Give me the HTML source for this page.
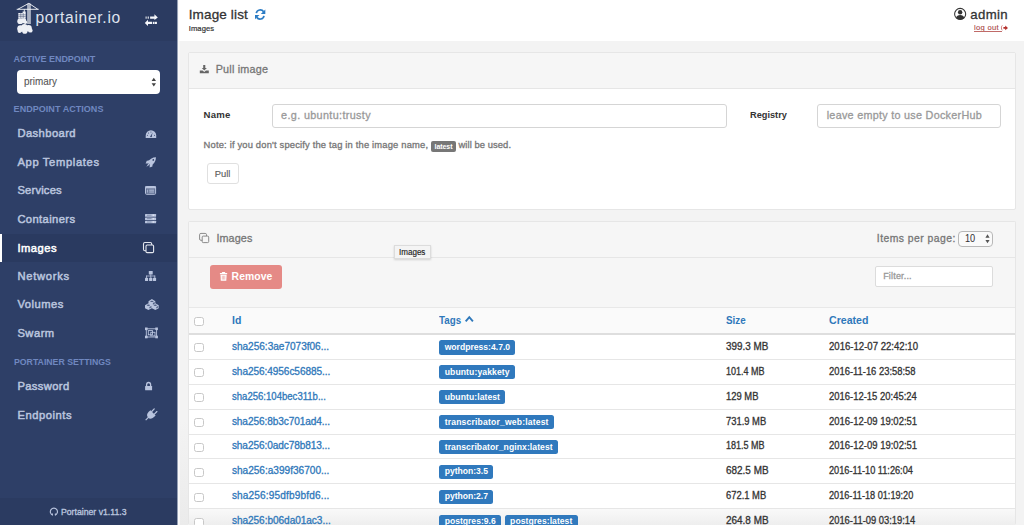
<!DOCTYPE html>
<html><head><meta charset="utf-8"><title>Portainer - Images</title>
<style>
html,body{margin:0;padding:0;width:1024px;height:525px;overflow:hidden;background:#f3f3f3;}
body{position:relative;font-family:"Liberation Sans", sans-serif;}
.t{position:absolute;white-space:nowrap;}
.r{position:absolute;}
.lbl{position:absolute;height:14.5px;line-height:14.5px;padding:0 4.5px;background:#2f78ba;color:#fff;font-weight:bold;font-size:9.4px;letter-spacing:0.1px;border-radius:2px;white-space:nowrap;}
</style></head><body>
<div class="r" style="left:0px;top:0px;width:1024.00px;height:525.00px;background:#f3f3f3;"></div>
<div class="r" style="left:178px;top:0px;width:846.00px;height:41.00px;background:#fff;"></div>
<div class="r" style="left:0px;top:0px;width:177.00px;height:525.00px;background:#2e3f67;"></div>
<div class="r" style="left:0px;top:0px;width:177.00px;height:41.00px;background:#2b3b61;"></div>
<div class="r" style="left:0px;top:498px;width:177.00px;height:27.00px;background:#2b3b61;"></div>
<div class="r" style="left:177px;top:0px;width:1.00px;height:525.00px;background:#95a0b5;"></div>
<div class="r" style="left:178px;top:0px;width:1.00px;height:525.00px;background:#fafafa;"></div>
<div class="r" style="left:179px;top:41px;width:1.00px;height:484.00px;background:#f7f7f7;"></div>
<div class="r" style="left:180px;top:420px;width:8.00px;height:105.00px;background:linear-gradient(#f3f3f3,#ebebeb);"></div>
<div class="t" style="left:35.50px;top:9.41px;font-size:15.6px;line-height:18.72px;color:#dfe3ee;letter-spacing:0.686px;">portainer.io</div>
<div class="t" style="left:13.60px;top:54.01px;font-size:9px;line-height:10.8px;color:#7088c0;font-weight:bold;letter-spacing:-0.023px;">ACTIVE ENDPOINT</div>
<div class="r" style="left:17px;top:69.8px;width:143.00px;height:24.20px;background:#fff;border-radius:4px;"></div>
<div class="t" style="left:23.70px;top:75.01px;font-size:10.5px;line-height:12.6px;color:#555;-webkit-text-stroke:0.1px #555;transform:scaleX(0.9424);transform-origin:0 0;">primary</div>
<div class="t" style="left:13.60px;top:103.91px;font-size:9px;line-height:10.8px;color:#7088c0;font-weight:bold;letter-spacing:0.042px;">ENDPOINT ACTIONS</div>
<div class="r" style="left:0px;top:234px;width:177.00px;height:28.00px;background:#2a3a60;"></div>
<div class="r" style="left:0px;top:234px;width:2.00px;height:28.00px;background:#fff;"></div>
<div class="t" style="left:17.40px;top:127.40px;font-size:11.2px;line-height:13.44px;color:#b9c4de;letter-spacing:0.433px;-webkit-text-stroke:0.5px #b9c4de;">Dashboard</div>
<div class="t" style="left:17.40px;top:156.10px;font-size:11.2px;line-height:13.44px;color:#b9c4de;letter-spacing:0.657px;-webkit-text-stroke:0.5px #b9c4de;">App Templates</div>
<div class="t" style="left:17.40px;top:184.40px;font-size:11.2px;line-height:13.44px;color:#b9c4de;letter-spacing:0.199px;-webkit-text-stroke:0.5px #b9c4de;">Services</div>
<div class="t" style="left:17.40px;top:212.90px;font-size:11.2px;line-height:13.44px;color:#b9c4de;letter-spacing:0.399px;-webkit-text-stroke:0.5px #b9c4de;">Containers</div>
<div class="t" style="left:17.40px;top:241.81px;font-size:11.2px;line-height:13.44px;color:#ffffff;letter-spacing:0.483px;-webkit-text-stroke:0.5px #ffffff;">Images</div>
<div class="t" style="left:17.40px;top:270.01px;font-size:11.2px;line-height:13.44px;color:#b9c4de;letter-spacing:0.739px;-webkit-text-stroke:0.5px #b9c4de;">Networks</div>
<div class="t" style="left:17.40px;top:298.31px;font-size:11.2px;line-height:13.44px;color:#b9c4de;letter-spacing:0.513px;-webkit-text-stroke:0.5px #b9c4de;">Volumes</div>
<div class="t" style="left:17.40px;top:326.81px;font-size:11.2px;line-height:13.44px;color:#b9c4de;letter-spacing:0.497px;-webkit-text-stroke:0.5px #b9c4de;">Swarm</div>
<div class="t" style="left:13.60px;top:356.91px;font-size:9px;line-height:10.8px;color:#7088c0;font-weight:bold;transform:scaleX(0.9695);transform-origin:0 0;">PORTAINER SETTINGS</div>
<div class="t" style="left:17.40px;top:380.40px;font-size:11.2px;line-height:13.44px;color:#b9c4de;letter-spacing:0.382px;-webkit-text-stroke:0.5px #b9c4de;">Password</div>
<div class="t" style="left:17.40px;top:409.10px;font-size:11.2px;line-height:13.44px;color:#b9c4de;letter-spacing:0.554px;-webkit-text-stroke:0.5px #b9c4de;">Endpoints</div>
<div class="t" style="left:60.50px;top:506.21px;font-size:9.4px;line-height:11.28px;color:#b9c4de;-webkit-text-stroke:0.35px #b9c4de;transform:scaleX(0.9264);transform-origin:0 0;">Portainer v1.11.3</div>
<div class="t" style="left:188.70px;top:6.61px;font-size:13.5px;line-height:16.2px;color:#333;letter-spacing:0.147px;-webkit-text-stroke:0.3px #333;">Image list</div>
<div class="t" style="left:188.70px;top:23.80px;font-size:7.6px;line-height:9.12px;color:#333;letter-spacing:0.099px;-webkit-text-stroke:0.2px #333;">Images</div>
<div class="t" style="left:970.20px;top:6.76px;font-size:13.2px;line-height:15.84px;color:#333;letter-spacing:0.395px;-webkit-text-stroke:0.3px #333;">admin</div>
<div class="t" style="left:974.00px;top:22.60px;font-size:7.6px;line-height:9.12px;color:#a94442;letter-spacing:0.315px;-webkit-text-stroke:0.1px #a94442;">log out</div>
<div class="r" style="left:974px;top:30.9px;width:27.80px;height:0.80px;background:#c06a68;"></div>
<div class="r" style="left:188px;top:52px;width:828.00px;height:158.00px;background:#fff;border:1px solid #e6e6e6;box-sizing:border-box;border-radius:2px;"></div>
<div class="r" style="left:189px;top:53px;width:826.00px;height:36.00px;background:#f6f6f6;border-bottom:1px solid #e6e6e6;box-sizing:border-box;"></div>
<div class="t" style="left:215.70px;top:63.41px;font-size:10.8px;line-height:12.96px;color:#767676;letter-spacing:0.209px;-webkit-text-stroke:0.3px #767676;">Pull image</div>
<div class="t" style="left:203.60px;top:108.92px;font-size:9.6px;line-height:11.52px;color:#333;font-weight:bold;letter-spacing:0.186px;">Name</div>
<div class="r" style="left:272px;top:103.5px;width:455.00px;height:24.00px;background:#fff;border:1px solid #d5d5d5;box-sizing:border-box;border-radius:3px;"></div>
<div class="t" style="left:281.10px;top:109.21px;font-size:10.8px;line-height:12.96px;color:#999;letter-spacing:0.357px;-webkit-text-stroke:0.3px #999;">e.g. ubuntu:trusty</div>
<div class="t" style="left:749.50px;top:109.01px;font-size:9.6px;line-height:11.52px;color:#333;font-weight:bold;transform:scaleX(0.9612);transform-origin:0 0;">Registry</div>
<div class="r" style="left:817.3px;top:103.5px;width:183.30px;height:24.00px;background:#fff;border:1px solid #d5d5d5;box-sizing:border-box;border-radius:3px;"></div>
<div class="t" style="left:826.70px;top:108.80px;font-size:10.8px;line-height:12.96px;color:#999;letter-spacing:0.276px;-webkit-text-stroke:0.3px #999;">leave empty to use DockerHub</div>
<div class="t" style="left:203.60px;top:139.31px;font-size:9.4px;line-height:11.28px;color:#767676;letter-spacing:0.172px;-webkit-text-stroke:0.3px #767676;">Note: if you don't specify the tag in the image name,</div>
<div class="r" style="left:431.2px;top:141.2px;width:24.60px;height:10.40px;background:#777;border-radius:2px;"></div>
<div class="t" style="left:434.50px;top:142.71px;font-size:7px;line-height:8.4px;color:#fff;font-weight:bold;letter-spacing:-0.059px;">latest</div>
<div class="t" style="left:458.50px;top:139.31px;font-size:9.4px;line-height:11.28px;color:#767676;letter-spacing:0.076px;-webkit-text-stroke:0.3px #767676;">will be used.</div>
<div class="r" style="left:207px;top:163px;width:32.00px;height:21.00px;background:#fff;border:1px solid #e0e0e0;box-sizing:border-box;border-radius:3px;"></div>
<div class="t" style="left:214.70px;top:167.90px;font-size:9.4px;line-height:11.28px;color:#5a5a5a;letter-spacing:-0.014px;-webkit-text-stroke:0.12px #5a5a5a;">Pull</div>
<div class="r" style="left:188px;top:221px;width:828.00px;height:304.00px;background:#fff;border:1px solid #e6e6e6;border-bottom:none;box-sizing:border-box;border-radius:2px;"></div>
<div class="r" style="left:189px;top:222px;width:826.00px;height:85.00px;background:#f6f6f6;"></div>
<div class="r" style="left:189px;top:257px;width:826.00px;height:1.00px;background:#e6e6e6;"></div>
<div class="t" style="left:216.40px;top:231.91px;font-size:10.8px;line-height:12.96px;color:#767676;letter-spacing:0.119px;-webkit-text-stroke:0.3px #767676;">Images</div>
<div class="t" style="left:876.80px;top:233.41px;font-size:10.4px;line-height:12.48px;color:#767676;letter-spacing:0.450px;-webkit-text-stroke:0.3px #767676;">Items per page:</div>
<div class="r" style="left:958px;top:231px;width:35.00px;height:16.00px;background:#fafafa;border:1px solid #b8b8b8;box-sizing:border-box;border-radius:4px;"></div>
<div class="t" style="left:965.40px;top:233.20px;font-size:10.2px;line-height:12.24px;color:#333;-webkit-text-stroke:0.05px #333;transform:scaleX(0.8992);transform-origin:0 0;">10</div>
<div class="r" style="left:210.3px;top:265.2px;width:71.80px;height:23.80px;background:#e58a86;border-radius:3px;"></div>
<div class="t" style="left:231.60px;top:271.00px;font-size:10.4px;line-height:12.48px;color:#fff;font-weight:bold;letter-spacing:0.072px;">Remove</div>
<div class="r" style="left:875px;top:265.5px;width:118.00px;height:21.00px;background:#fff;border:1px solid #dcdcdc;box-sizing:border-box;border-radius:2px;"></div>
<div class="t" style="left:883.20px;top:271.01px;font-size:9px;line-height:10.8px;color:#999;letter-spacing:0.173px;-webkit-text-stroke:0.3px #999;">Filter...</div>
<div class="r" style="left:394px;top:245.3px;width:37.00px;height:14.00px;background:#f4f4f4;border:1px solid #dcdcdc;box-sizing:border-box;box-shadow:0 1px 2px rgba(0,0,0,.15);"></div>
<div class="t" style="left:398.80px;top:248.02px;font-size:8.3px;line-height:9.96px;color:#222;-webkit-text-stroke:0.15px #222;transform:scaleX(0.9699);transform-origin:0 0;">Images</div>
<div class="r" style="left:189px;top:307px;width:826.00px;height:1.00px;background:#e8e8e8;"></div>
<div class="r" style="left:189px;top:308px;width:826.00px;height:25.00px;background:#fafafa;"></div>
<div class="r" style="left:189px;top:333px;width:826.00px;height:2.00px;background:#dedede;"></div>
<div class="r" style="left:194px;top:317px;width:9.50px;height:9.00px;background:#fff;border:1px solid #c8c8c8;box-sizing:border-box;border-radius:2.5px;"></div>
<div class="t" style="left:231.90px;top:314.41px;font-size:10.6px;line-height:12.72px;color:#2f78ba;font-weight:bold;transform:scaleX(0.9871);transform-origin:0 0;">Id</div>
<div class="t" style="left:439.40px;top:314.41px;font-size:10.6px;line-height:12.72px;color:#2f78ba;font-weight:bold;transform:scaleX(0.9226);transform-origin:0 0;">Tags</div>
<div class="t" style="left:726.20px;top:314.41px;font-size:10.6px;line-height:12.72px;color:#2f78ba;font-weight:bold;transform:scaleX(0.9291);transform-origin:0 0;">Size</div>
<div class="t" style="left:829.00px;top:314.41px;font-size:10.6px;line-height:12.72px;color:#2f78ba;font-weight:bold;letter-spacing:-0.009px;">Created</div>
<div class="r" style="left:194px;top:343px;width:9.50px;height:9.00px;background:#fff;border:1px solid #c8c8c8;box-sizing:border-box;border-radius:2.5px;"></div>
<div class="t" style="left:231.90px;top:340.81px;font-size:10.1px;line-height:12.12px;color:#2f78ba;letter-spacing:-0.025px;-webkit-text-stroke:0.3px #2f78ba;">sha256:3ae7073f06...</div>
<div class="r" style="left:439.2px;top:340.2px;width:76.20px;height:14.40px;background:#3079bd;border-radius:2.5px;"></div>
<div class="t" style="left:444.70px;top:341.91px;font-size:8.6px;line-height:10.32px;color:#fff;font-weight:bold;letter-spacing:-0.003px;">wordpress:4.7.0</div>
<div class="t" style="left:726.20px;top:340.80px;font-size:10.2px;line-height:12.24px;color:#333;-webkit-text-stroke:0.3px #333;transform:scaleX(0.9700);transform-origin:0 0;">399.3 MB</div>
<div class="t" style="left:829.00px;top:340.80px;font-size:10.2px;line-height:12.24px;color:#333;-webkit-text-stroke:0.3px #333;transform:scaleX(0.9407);transform-origin:0 0;">2016-12-07 22:42:10</div>
<div class="r" style="left:189px;top:359px;width:826.00px;height:1.00px;background:#e6e6e6;"></div>
<div class="r" style="left:194px;top:368px;width:9.50px;height:9.00px;background:#fff;border:1px solid #c8c8c8;box-sizing:border-box;border-radius:2.5px;"></div>
<div class="t" style="left:231.90px;top:365.72px;font-size:10.1px;line-height:12.12px;color:#2f78ba;letter-spacing:-0.079px;-webkit-text-stroke:0.3px #2f78ba;">sha256:4956c56885...</div>
<div class="r" style="left:439.2px;top:365.09999999999997px;width:75.70px;height:14.40px;background:#3079bd;border-radius:2.5px;"></div>
<div class="t" style="left:444.70px;top:366.80px;font-size:8.6px;line-height:10.32px;color:#fff;font-weight:bold;letter-spacing:0.106px;">ubuntu:yakkety</div>
<div class="t" style="left:726.20px;top:365.70px;font-size:10.2px;line-height:12.24px;color:#333;-webkit-text-stroke:0.3px #333;transform:scaleX(0.8851);transform-origin:0 0;">101.4 MB</div>
<div class="t" style="left:829.00px;top:365.70px;font-size:10.2px;line-height:12.24px;color:#333;-webkit-text-stroke:0.3px #333;transform:scaleX(0.9217);transform-origin:0 0;">2016-11-16 23:58:58</div>
<div class="r" style="left:189px;top:384px;width:826.00px;height:1.00px;background:#e6e6e6;"></div>
<div class="r" style="left:194px;top:393px;width:9.50px;height:9.00px;background:#fff;border:1px solid #c8c8c8;box-sizing:border-box;border-radius:2.5px;"></div>
<div class="t" style="left:231.90px;top:390.61px;font-size:10.1px;line-height:12.12px;color:#2f78ba;-webkit-text-stroke:0.3px #2f78ba;transform:scaleX(0.9470);transform-origin:0 0;">sha256:104bec311b...</div>
<div class="r" style="left:439.2px;top:390.0px;width:66.10px;height:14.40px;background:#3079bd;border-radius:2.5px;"></div>
<div class="t" style="left:444.70px;top:391.71px;font-size:8.6px;line-height:10.32px;color:#fff;font-weight:bold;letter-spacing:0.073px;">ubuntu:latest</div>
<div class="t" style="left:726.20px;top:390.61px;font-size:10.2px;line-height:12.24px;color:#333;-webkit-text-stroke:0.3px #333;transform:scaleX(0.9228);transform-origin:0 0;">129 MB</div>
<div class="t" style="left:829.00px;top:390.61px;font-size:10.2px;line-height:12.24px;color:#333;-webkit-text-stroke:0.3px #333;transform:scaleX(0.9280);transform-origin:0 0;">2016-12-15 20:45:24</div>
<div class="r" style="left:189px;top:409px;width:826.00px;height:1.00px;background:#e6e6e6;"></div>
<div class="r" style="left:194px;top:418px;width:9.50px;height:9.00px;background:#fff;border:1px solid #c8c8c8;box-sizing:border-box;border-radius:2.5px;"></div>
<div class="t" style="left:231.90px;top:415.50px;font-size:10.1px;line-height:12.12px;color:#2f78ba;letter-spacing:-0.095px;-webkit-text-stroke:0.3px #2f78ba;">sha256:8b3c701ad4...</div>
<div class="r" style="left:439.2px;top:414.9px;width:114.60px;height:14.40px;background:#3079bd;border-radius:2.5px;"></div>
<div class="t" style="left:444.70px;top:416.61px;font-size:8.6px;line-height:10.32px;color:#fff;font-weight:bold;letter-spacing:0.173px;">transcribator_web:latest</div>
<div class="t" style="left:726.20px;top:415.50px;font-size:10.2px;line-height:12.24px;color:#333;-webkit-text-stroke:0.3px #333;transform:scaleX(0.9218);transform-origin:0 0;">731.9 MB</div>
<div class="t" style="left:829.00px;top:415.50px;font-size:10.2px;line-height:12.24px;color:#333;-webkit-text-stroke:0.3px #333;transform:scaleX(0.9312);transform-origin:0 0;">2016-12-09 19:02:51</div>
<div class="r" style="left:189px;top:434px;width:826.00px;height:1.00px;background:#e6e6e6;"></div>
<div class="r" style="left:194px;top:443px;width:9.50px;height:9.00px;background:#fff;border:1px solid #c8c8c8;box-sizing:border-box;border-radius:2.5px;"></div>
<div class="t" style="left:231.90px;top:440.41px;font-size:10.1px;line-height:12.12px;color:#2f78ba;letter-spacing:-0.090px;-webkit-text-stroke:0.3px #2f78ba;">sha256:0adc78b813...</div>
<div class="r" style="left:439.2px;top:439.8px;width:118.80px;height:14.40px;background:#3079bd;border-radius:2.5px;"></div>
<div class="t" style="left:444.70px;top:441.50px;font-size:8.6px;line-height:10.32px;color:#fff;font-weight:bold;letter-spacing:0.079px;">transcribator_nginx:latest</div>
<div class="t" style="left:726.20px;top:440.40px;font-size:10.2px;line-height:12.24px;color:#333;-webkit-text-stroke:0.3px #333;transform:scaleX(0.8851);transform-origin:0 0;">181.5 MB</div>
<div class="t" style="left:829.00px;top:440.40px;font-size:10.2px;line-height:12.24px;color:#333;-webkit-text-stroke:0.3px #333;transform:scaleX(0.9312);transform-origin:0 0;">2016-12-09 19:02:51</div>
<div class="r" style="left:189px;top:458px;width:826.00px;height:1.00px;background:#e6e6e6;"></div>
<div class="r" style="left:194px;top:468px;width:9.50px;height:9.00px;background:#fff;border:1px solid #c8c8c8;box-sizing:border-box;border-radius:2.5px;"></div>
<div class="t" style="left:231.90px;top:465.31px;font-size:10.1px;line-height:12.12px;color:#2f78ba;letter-spacing:-0.009px;-webkit-text-stroke:0.3px #2f78ba;">sha256:a399f36700...</div>
<div class="r" style="left:439.2px;top:464.7px;width:54.10px;height:14.40px;background:#3079bd;border-radius:2.5px;"></div>
<div class="t" style="left:444.70px;top:466.41px;font-size:8.6px;line-height:10.32px;color:#fff;font-weight:bold;letter-spacing:-0.017px;">python:3.5</div>
<div class="t" style="left:726.20px;top:465.30px;font-size:10.2px;line-height:12.24px;color:#333;-webkit-text-stroke:0.3px #333;transform:scaleX(0.9769);transform-origin:0 0;">682.5 MB</div>
<div class="t" style="left:829.00px;top:465.30px;font-size:10.2px;line-height:12.24px;color:#333;-webkit-text-stroke:0.3px #333;transform:scaleX(0.9012);transform-origin:0 0;">2016-11-10 11:26:04</div>
<div class="r" style="left:189px;top:483px;width:826.00px;height:1.00px;background:#e6e6e6;"></div>
<div class="r" style="left:194px;top:493px;width:9.50px;height:9.00px;background:#fff;border:1px solid #c8c8c8;box-sizing:border-box;border-radius:2.5px;"></div>
<div class="t" style="left:231.90px;top:490.22px;font-size:10.1px;line-height:12.12px;color:#2f78ba;letter-spacing:0.139px;-webkit-text-stroke:0.3px #2f78ba;">sha256:95dfb9bfd6...</div>
<div class="r" style="left:439.2px;top:489.59999999999997px;width:54.10px;height:14.40px;background:#3079bd;border-radius:2.5px;"></div>
<div class="t" style="left:444.70px;top:491.30px;font-size:8.6px;line-height:10.32px;color:#fff;font-weight:bold;letter-spacing:-0.017px;">python:2.7</div>
<div class="t" style="left:726.20px;top:490.20px;font-size:10.2px;line-height:12.24px;color:#333;-webkit-text-stroke:0.3px #333;transform:scaleX(0.9218);transform-origin:0 0;">672.1 MB</div>
<div class="t" style="left:829.00px;top:490.20px;font-size:10.2px;line-height:12.24px;color:#333;-webkit-text-stroke:0.3px #333;transform:scaleX(0.8983);transform-origin:0 0;">2016-11-18 01:19:20</div>
<div class="r" style="left:189px;top:509.29999999999995px;width:826.00px;height:15.70px;background:linear-gradient(#f9f9f9,#eeeeee);"></div>
<div class="r" style="left:189px;top:508px;width:826.00px;height:1.00px;background:#e6e6e6;"></div>
<div class="r" style="left:194px;top:518px;width:9.50px;height:9.00px;background:#fff;border:1px solid #c8c8c8;box-sizing:border-box;border-radius:2.5px;"></div>
<div class="t" style="left:231.90px;top:515.11px;font-size:10.1px;line-height:12.12px;color:#2f78ba;letter-spacing:-0.058px;-webkit-text-stroke:0.3px #2f78ba;">sha256:b06da01ac3...</div>
<div class="r" style="left:439.2px;top:514.5px;width:61.80px;height:14.40px;background:#3079bd;border-radius:2.5px;"></div>
<div class="t" style="left:444.70px;top:516.21px;font-size:8.6px;line-height:10.32px;color:#fff;font-weight:bold;letter-spacing:-0.010px;">postgres:9.6</div>
<div class="r" style="left:504.6px;top:514.5px;width:73.00px;height:14.40px;background:#3079bd;border-radius:2.5px;"></div>
<div class="t" style="left:510.10px;top:516.21px;font-size:8.6px;line-height:10.32px;color:#fff;font-weight:bold;letter-spacing:0.042px;">postgres:latest</div>
<div class="t" style="left:726.20px;top:515.11px;font-size:10.2px;line-height:12.24px;color:#333;-webkit-text-stroke:0.3px #333;transform:scaleX(0.9769);transform-origin:0 0;">264.8 MB</div>
<div class="t" style="left:829.00px;top:515.11px;font-size:10.2px;line-height:12.24px;color:#333;-webkit-text-stroke:0.3px #333;transform:scaleX(0.9185);transform-origin:0 0;">2016-11-09 03:19:14</div>

<svg class="r" style="left:0;top:0" width="1024" height="525" viewBox="0 0 1024 525">
<!-- crane logo -->
<rect x="27.9" y="4" width="2.2" height="20" fill="#eef0f5" fill-opacity="0.45"/>
<g stroke="#eef0f5" stroke-width="0.95" fill="none">
<path d="M16.7 9.3 H38.7 M28.9 3.3 L17.8 9.3 M28.9 3.3 L37.8 9.3 M27.9 3.6 V24 M30.1 3.6 V24 M24.3 9.3 V12"/>
</g>
<g fill="#eef0f5">
<rect x="18.3" y="13" width="7.4" height="5.5"/>
<rect x="22.6" y="11.5" width="3.1" height="1.6"/>
<circle cx="20.2" cy="21.2" r="2.9"/><circle cx="23.6" cy="20.6" r="2.6"/><circle cx="25.4" cy="22.2" r="1.8"/>
<circle cx="20.6" cy="28.6" r="3.4"/><circle cx="24.4" cy="26.9" r="3.0"/><circle cx="28.6" cy="28.2" r="3.2"/><circle cx="30.4" cy="30.4" r="2.2"/><circle cx="24.8" cy="31.2" r="2.6"/><circle cx="19.6" cy="31" r="2"/>
</g>
<g stroke="#2b3b61" stroke-width="0.45" fill="none"><path d="M18.3 14.8 H25.7 M18.3 16.6 H25.7 M20.8 13 V18.5 M23.2 13 V18.5"/></g>

<!-- exchange -->
<g fill="#f6f7fb">
<rect x="145.6" y="16.5" width="1" height="2.2"/><rect x="147.7" y="16.5" width="1.1" height="2.2"/>
<path d="M150.1 16.5 H154.4 V14.3 L157.8 17.6 L154.4 20.1 V18.7 H150.1 Z"/>
<path d="M152 21.8 H148 V19.7 L144.8 22.9 L148 26.1 V24 H152 Z"/>
<rect x="152.8" y="21.8" width="1.5" height="2.2"/><rect x="154.6" y="21.8" width="2.3" height="2.2"/>
</g>

<!-- dashboard -->
<path d="M145.7 138.1 V135.6 A5.25 5.3 0 0 1 156.2 135.6 V138.1 Z" fill="#b9c4de"/>
<g fill="#2e3f67">
<path d="M150.5 136.3 L152.7 132.2 L151.6 136.7 Z"/>
<circle cx="151" cy="136.4" r="0.75"/>
<circle cx="147.4" cy="135.2" r="0.5"/><circle cx="148.5" cy="132.9" r="0.5"/><circle cx="150.95" cy="131.9" r="0.5"/><circle cx="154.5" cy="135.2" r="0.5"/>
</g>

<!-- rocket -->
<g fill="#b9c4de">
<path d="M156 157.2 C152.4 157.2 149.3 159.2 147.6 162.4 L150.8 165.6 C154 163.9 156 160.8 156 157.2 Z"/>
<path d="M149.6 160.6 L146.8 160.8 L145.6 163.6 L148.6 163.4 Z"/>
<path d="M152.6 163.6 L152.4 166.4 L149.6 167.6 L149.8 164.6 Z"/>
<path d="M148.4 163.6 L146.4 166.8 L149.6 164.8 Z"/>
</g>
<circle cx="153.3" cy="159.9" r="0.85" fill="#2e3f67"/>

<!-- services -->
<rect x="145.5" y="186.5" width="10.1" height="7.8" rx="0.9" fill="none" stroke="#b9c4de" stroke-width="1"/>
<rect x="145.2" y="186.2" width="10.7" height="2.3" rx="0.6" fill="#b9c4de"/>
<rect x="146.2" y="188.5" width="8.7" height="5.3" fill="#b9c4de" fill-opacity="0.45"/>
<path d="M149.2 190.2 H154 M149.2 192 H154" stroke="#b9c4de" stroke-width="0.9"/>
<path d="M147.4 189.7 V192.6" stroke="#b9c4de" stroke-width="0.8"/>

<!-- containers -->
<g fill="#b9c4de">
<rect x="145" y="214" width="11.1" height="2.7" rx="0.5"/>
<rect x="145" y="217.4" width="11.1" height="2.7" rx="0.5"/>
<rect x="145" y="220.8" width="11.1" height="2.5" rx="0.5"/>
</g>
<g stroke="#2e3f67" stroke-width="0.7" stroke-opacity="0.55"><path d="M147 215.2 H151.5 M147 218.6 H151.5 M147 222 H151.5"/></g>
<g fill="#dfe5f2"><circle cx="153.4" cy="215.3" r="0.8"/><circle cx="153.4" cy="218.7" r="0.8"/><circle cx="153.4" cy="222" r="0.8"/></g>

<!-- images (active) -->
<rect x="143.5" y="242.5" width="8.2" height="8.2" rx="1.4" fill="none" stroke="#e4e7ef" stroke-width="1.1"/>
<rect x="146" y="245" width="7.6" height="7.6" rx="1.2" fill="#2a3a60" stroke="#e4e7ef" stroke-width="1.1"/>

<!-- networks -->
<g fill="#b9c4de">
<rect x="148.8" y="271" width="3.9" height="3.5" rx="0.6"/>
<rect x="150.4" y="274.3" width="0.8" height="3.6"/>
<rect x="146.2" y="275.6" width="9" height="0.8"/>
<rect x="146.2" y="275.6" width="0.8" height="2.4"/><rect x="154.4" y="275.6" width="0.8" height="2.4"/>
<rect x="145" y="277.8" width="3.1" height="3.2" rx="0.6"/>
<rect x="149.1" y="277.8" width="3.3" height="3.2" rx="0.6"/>
<rect x="153" y="277.8" width="3.1" height="3.2" rx="0.6"/>
</g>

<!-- volumes (cubes) -->
<g fill="#b9c4de">
<path d="M148.5 301.3 L151.9 299 L155.3 301.3 V304.3 L151.9 306.3 L148.5 304.3 Z"/>
<path d="M145 305.2 L148.4 303.2 L151.8 305.2 V308.2 L148.4 310 L145 308.2 Z"/>
<path d="M151.9 305.2 L155.3 303.2 L158.7 305.2 V308.2 L155.3 310 L151.9 308.2 Z"/>
</g>
<g fill="#2e3f67" fill-opacity="0.75">
<ellipse cx="151.9" cy="301.4" rx="1.6" ry="0.7"/>
<ellipse cx="148.4" cy="305.3" rx="1.6" ry="0.7"/>
<ellipse cx="155.3" cy="305.3" rx="1.6" ry="0.7"/>
<path d="M149.4 307 L151.2 306 V307.6 L149.4 308.6 Z"/>
<path d="M156.3 307 L158.1 306 V307.6 L156.3 308.6 Z"/>
<path d="M152.9 303.1 L154.7 302.1 V303.7 L152.9 304.7 Z"/>
</g>

<!-- swarm (object-group) -->
<g fill="none" stroke="#b9c4de" stroke-width="0.9">
<rect x="146.3" y="328.8" width="10.3" height="8.2"/>
<rect x="148.3" y="330.6" width="4.2" height="4.2"/>
<rect x="150.8" y="332.3" width="4.2" height="3.6"/>
</g>
<g fill="#b9c4de">
<rect x="145" y="327.5" width="2.6" height="2.6"/><rect x="155.3" y="327.5" width="2.6" height="2.6"/>
<rect x="145" y="335.7" width="2.6" height="2.6"/><rect x="155.3" y="335.7" width="2.6" height="2.6"/>
</g>

<!-- lock -->
<path d="M146.6 386.4 V384.8 A2 2.3 0 0 1 150.6 384.8 V386.4" fill="none" stroke="#b9c4de" stroke-width="1.3"/>
<rect x="145.1" y="386.1" width="7" height="4.2" rx="0.5" fill="#b9c4de"/>

<!-- plug -->
<g fill="#b9c4de" transform="translate(150.9 414.9) rotate(45)">
<rect x="-2.5" y="-7.2" width="1.25" height="4.8" rx="0.6"/>
<rect x="1.25" y="-7.2" width="1.25" height="4.8" rx="0.6"/>
<path d="M-3.7 -3 H3.7 V-0.6 C3.7 2.6 2.1 3.9 0 3.9 C-2.1 3.9 -3.7 2.6 -3.7 -0.6 Z"/>
<rect x="-0.6" y="3.2" width="1.2" height="4.2"/>
</g>

<!-- github -->
<path d="M52.9 515.1 A3.55 3.55 0 1 1 54.9 515.1" fill="none" stroke="#b9c4de" stroke-width="1.15"/>
<path d="M52.4 515.2 V513.4 M55.4 515.2 V513.4" stroke="#b9c4de" stroke-width="0.9"/>

<!-- refresh -->
<g fill="none" stroke="#2a7bc4" stroke-width="1.7">
<path d="M256.3 13.2 A4 4 0 0 1 263.6 11.8"/>
<path d="M264 15.8 A4 4 0 0 1 256.7 17.2"/>
</g>
<g fill="#2a7bc4">
<path d="M265.3 9.5 V14.1 H260.8 Z"/>
<path d="M255 19.3 V14.9 H259.5 Z"/>
</g>

<!-- user circle -->
<circle cx="960.15" cy="13.95" r="5.55" fill="none" stroke="#333" stroke-width="1.05"/>
<circle cx="960.15" cy="12.3" r="2.2" fill="#333"/>
<path d="M956.1 17.9 C956.6 15.9 958 15.1 960.15 15.1 C962.3 15.1 963.7 15.9 964.2 17.9 C963.2 19 961.8 19.5 960.15 19.5 C958.5 19.5 957.1 19 956.1 17.9 Z" fill="#333"/>

<!-- logout -->
<path d="M1002.3 25.4 C1001.1 26.4 1001.1 29.3 1002.3 30.3" fill="none" stroke="#c0504d" stroke-width="0.75"/>
<path d="M1003.4 27.1 H1005.2 V25.5 L1008 27.9 L1005.2 30.3 V28.7 H1003.4 Z" fill="#b4302c"/>

<!-- download -->
<g fill="#666">
<rect x="203.2" y="65" width="2.1" height="3.5"/>
<path d="M201.8 67.9 H206.9 L204.25 70.4 Z"/>
<path d="M199.8 70.4 H202.6 L204.25 72 L205.9 70.4 H208.8 V73.2 H199.8 Z"/>
</g>

<!-- clone widget header -->
<rect x="199.6" y="233.4" width="6.9" height="6.9" rx="1.3" fill="none" stroke="#8a8a8a" stroke-width="1"/>
<rect x="202.2" y="236.1" width="6.5" height="6.5" rx="1" fill="#f6f6f6" stroke="#8a8a8a" stroke-width="1"/>

<!-- trash -->
<g fill="#fff">
<rect x="219.9" y="273" width="7.3" height="1.3" rx="0.3"/>
<rect x="221.9" y="272.1" width="3.3" height="1.2" rx="0.4"/>
<path d="M220.5 274.7 H226.6 L226.3 280.8 H220.8 Z"/>
</g>
<g stroke="#e58a86" stroke-width="0.55"><path d="M222.3 275.7 V279.6 M223.55 275.7 V279.6 M224.8 275.7 V279.6"/></g>

<!-- caret up -->
<path d="M465.7 321.4 L469.3 317.2 L472.9 321.4" fill="none" stroke="#2f78ba" stroke-width="1.9"/>

<!-- select arrows -->
<path d="M153.8 77.8 L156 81 H151.6 Z M153.8 86.4 L156 83.2 H151.6 Z" fill="#444"/>
<path d="M987.5 234.3 L989.6 237.8 H985.4 Z M987.5 243.3 L989.6 239.9 H985.4 Z" fill="#555"/>
</svg>
</body></html>
